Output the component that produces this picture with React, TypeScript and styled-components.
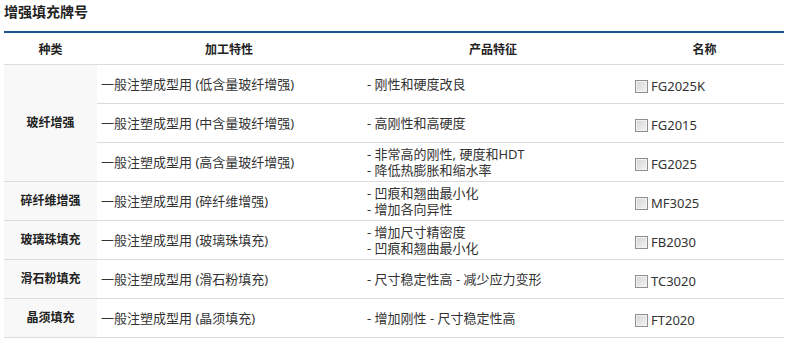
import styled, { createGlobalStyle } from "styled-components";

const GlobalStyle = createGlobalStyle`
  body {
    margin: 0;
    background: #fff;
    font-family: "Noto Sans", "Noto Sans CJK SC", sans-serif;
    color: #333;
  }
`;

type Grade = {
  process: string;
  features: string[];
  name: string;
};

type Group = {
  kind: string;
  grades: Grade[];
};

const groups: Group[] = [
  {
    kind: "玻纤增强",
    grades: [
      { process: "一般注塑成型用 (低含量玻纤增强)", features: ["- 刚性和硬度改良"], name: "FG2025K" },
      { process: "一般注塑成型用 (中含量玻纤增强)", features: ["- 高刚性和高硬度"], name: "FG2015" },
      {
        process: "一般注塑成型用 (高含量玻纤增强)",
        features: ["- 非常高的刚性, 硬度和HDT", "- 降低热膨胀和缩水率"],
        name: "FG2025",
      },
    ],
  },
  {
    kind: "碎纤维增强",
    grades: [
      {
        process: "一般注塑成型用 (碎纤维增强)",
        features: ["- 凹痕和翘曲最小化", "- 增加各向异性"],
        name: "MF3025",
      },
    ],
  },
  {
    kind: "玻璃珠填充",
    grades: [
      {
        process: "一般注塑成型用 (玻璃珠填充)",
        features: ["- 增加尺寸精密度", "- 凹痕和翘曲最小化"],
        name: "FB2030",
      },
    ],
  },
  {
    kind: "滑石粉填充",
    grades: [
      { process: "一般注塑成型用 (滑石粉填充)", features: ["- 尺寸稳定性高 - 减少应力变形"], name: "TC3020" },
    ],
  },
  {
    kind: "晶须填充",
    grades: [
      { process: "一般注塑成型用 (晶须填充)", features: ["- 增加刚性 - 尺寸稳定性高"], name: "FT2020" },
    ],
  },
];

export default function App() {
  return (
    <>
      <GlobalStyle />
      <Page>
        <Title>增强填充牌号</Title>
        <Table>
          <colgroup>
            <col style={{ width: 93 }} />
            <col style={{ width: 264 }} />
            <col style={{ width: 264 }} />
            <col />
          </colgroup>
          <thead>
            <tr>
              <HeadCell>种类</HeadCell>
              <HeadCell>加工特性</HeadCell>
              <HeadCell>产品特征</HeadCell>
              <HeadCell>名称</HeadCell>
            </tr>
          </thead>
          <tbody>
            {groups.map((group) =>
              group.grades.map((grade, i) => (
                <Row key={grade.name}>
                  {i === 0 && <KindCell rowSpan={group.grades.length}>{group.kind}</KindCell>}
                  <ProcessCell>{grade.process}</ProcessCell>
                  <FeatureCell>
                    {grade.features.map((f) => (
                      <Line key={f}>{f}</Line>
                    ))}
                  </FeatureCell>
                  <NameCell>
                    <CheckBox />
                    {grade.name}
                  </NameCell>
                </Row>
              ))
            )}
          </tbody>
        </Table>
      </Page>
    </>
  );
}

const Page = styled.div`
  padding: 0 4px;
  width: 780px;
`;

const Title = styled.h3`
  margin: 0 0 7px;
  height: 24px;
  line-height: 24px;
  font-size: 14px;
  font-weight: 700;
  color: #222;
`;

const Table = styled.table`
  width: 780px;
  border-collapse: collapse;
  table-layout: fixed;
  border-top: 2px solid #1c5592;
  border-bottom: 1px solid #22596f;
  font-size: 13px;
`;

const HeadCell = styled.th`
  height: 31px;
  padding: 0;
  font-size: 12px;
  font-weight: 700;
  color: #222;
  text-align: center;
  border-bottom: 1px solid #dcdcdc;
`;

const Row = styled.tr`
  height: 39px;
`;

const Cell = styled.td`
  padding: 0;
  border-bottom: 1px solid #dcdcdc;
  vertical-align: middle;
  line-height: 16px;
  color: #333;
`;

const KindCell = styled(Cell)`
  background: #f8f8f8;
  text-align: center;
  font-size: 12px;
  font-weight: 700;
  color: #222;
`;

const ProcessCell = styled(Cell)`
  padding-left: 4px;
`;

const FeatureCell = styled(Cell)`
  padding-left: 6px;
`;

const Line = styled.div``;

const NameCell = styled(Cell)`
  padding-left: 10px;
  padding-top: 3px;
  white-space: nowrap;
`;

const CheckBox = styled.span`
  display: inline-block;
  box-sizing: border-box;
  width: 13px;
  height: 13px;
  margin-right: 3px;
  vertical-align: -2px;
  border: 1px solid #8e8f8f;
  background: linear-gradient(135deg, #d4d4d4, #f4f4f4);
  box-shadow: inset 0 0 0 1px #f1f1f1;
`;
